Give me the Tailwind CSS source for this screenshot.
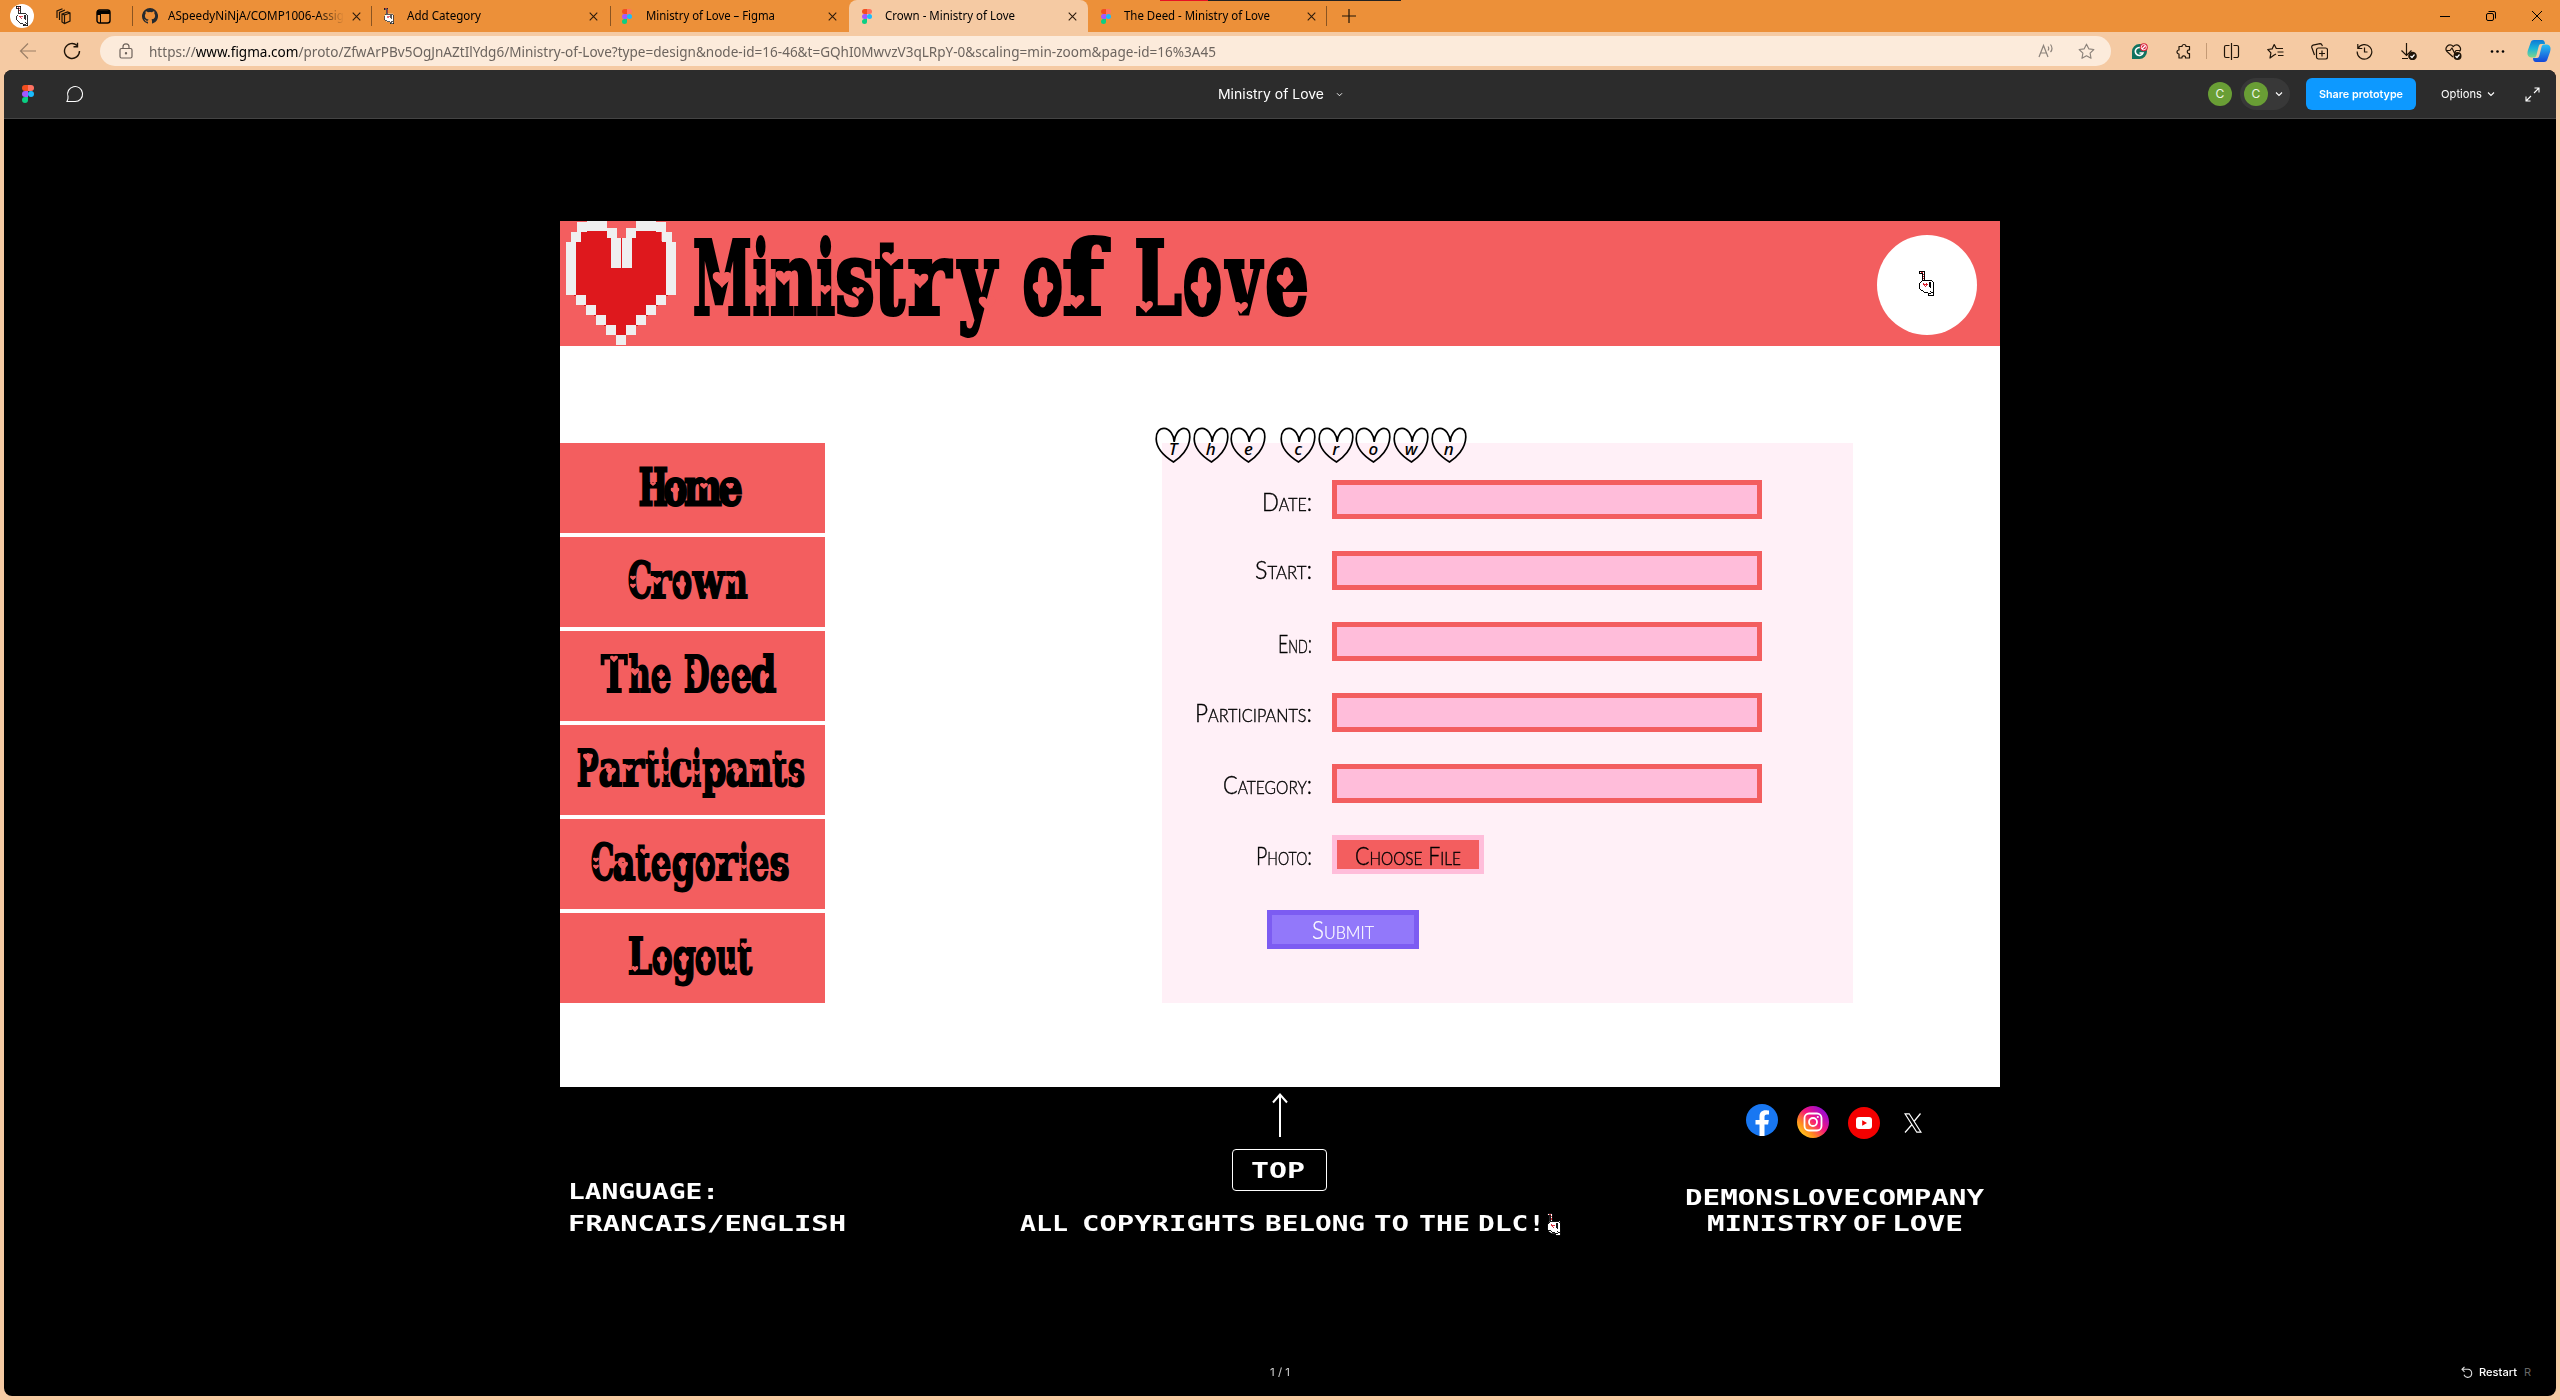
<!DOCTYPE html>
<html lang="en">
<head>
<meta charset="utf-8">
<title>Crown - Ministry of Love</title>
<script src="https://cdn.jsdelivr.net/npm/@tailwindcss/browser@4"></script>
</head>
<body class="w-[2560px] h-[1400px] overflow-hidden bg-[#f5caa3] font-['Noto_Sans','Open_Sans',sans-serif] text-black">
<svg class="hidden">
  <symbol id="figma" viewBox="0 0 12 18"><path fill="#f24e1e" d="M3 0h3v6H3a3 3 0 0 1 0-6z"/><path fill="#ff7262" d="M6 0h3a3 3 0 0 1 0 6H6z"/><path fill="#a259ff" d="M3 6h3v6H3a3 3 0 0 1 0-6z"/><circle cx="9" cy="9" r="3" fill="#1abcfe"/><path fill="#0acf83" d="M3 12h3v3a3 3 0 1 1-3-3z"/></symbol>
  <symbol id="heart" viewBox="0 0 20 20" preserveAspectRatio="none"><path d="M10 20C7 14 0 11 0 5C0-1 8-2 10 4C12-2 20-1 20 5C20 11 13 14 10 20z"/></symbol>
  <symbol id="cane" viewBox="0 0 15 25"><path fill="#fff" d="M0 0h6v9h8l1 16H9v-3H5L2 20L0 17v-4l3-4V3H0z"/><path fill="none" stroke="#000" shape-rendering="crispEdges" d="M0 .5h6M.5 0v3M0 2.5h4M3.5 3v6M5.5 0v9M3 9.5h10M2 10.5h1M1 11.5h1M.5 12v6M1 18.5h1M2 19.5h2M4 20.5h1M5 21.5h4M13 10.5h1M14.5 11v14M9 24.5h6M9.5 22v3M10 22.5h2M11 20.5h1M12 21.5h2M10.5 11v5M11.500 11v6"/><path fill="none" stroke="#d81e2c" shape-rendering="crispEdges" d="M2 1.500h2M4.500 3v1M4.500 5v1M4.500 7v1M4 12.500h1M7 12.500h1M4 13.500h5M5 14.500h1M7 14.500h1M6 15.500h1"/></symbol>
  <symbol id="x" viewBox="0 0 10 10"><path d="M.8.8l8.400 8.400M9.200.8L.8 9.200" fill="none" stroke="#2a1a0c" stroke-width="1.200"/></symbol>
  <symbol id="chev" viewBox="0 0 8 6"><path d="M1 1.500l3 3l3-3" fill="none" stroke="#fff" stroke-width="1.100"/></symbol>
</svg>

<!-- Tab strip -->
<header class="relative flex h-8 items-center bg-[#ec9039] text-[12px] leading-none">
  <div class="absolute left-[1160px] top-0 flex h-[1px] w-[241px] bg-[#222]"><div class="w-12 bg-[#e81123]"></div></div>
  <div class="flex w-[132px] items-center pl-[10px]">
    <div class="flex size-6 items-center justify-center rounded-full bg-white"><svg class="h-5 w-3"><use href="#cane"/></svg></div>
    <svg class="ml-5 size-[17px]" viewBox="0 0 17 17" fill="none" stroke="#1f1408" stroke-width="1.200"><path d="M8 6l5.500-2 2.500 1v8l-5.500 2.500L8 14zM8 6l2.500 1v8M10.500 7L16 5M5.500 12V4.500L11 2M3 10V3L8.500.8"/></svg>
    <svg class="ml-[25px] size-[15px]" viewBox="0 0 15 15"><rect x="1" y="1" width="13" height="13" rx="2.500" fill="none" stroke="#000" stroke-width="1.400"/><path d="M1 1.500h13V5H1zM1 5h3v1H1z"/><path d="M4.500 5v9" stroke="#000"/></svg>
  </div>
  <div class="flex h-8 w-[239px] items-center"><i class="h-5 w-px bg-[#8a5421]"></i>
    <svg class="ml-[9px] size-4" viewBox="0 0 16 16"><path fill="#24292f" d="M8 0a8 8 0 0 0-2.530 15.590c.4.070.55-.17.550-.38v-1.490C3.800 14.200 3.330 12.800 3.330 12.800c-.36-.92-.9-1.170-.9-1.170-.72-.5.060-.49.060-.49.8.060 1.230.82 1.230.82.710 1.220 1.870.87 2.330.66.070-.52.280-.87.500-1.070-1.770-.2-3.640-.89-3.640-3.950 0-.87.310-1.590.82-2.150-.08-.2-.36-1.020.080-2.120 0 0 .67-.21 2.200.82a7.600 7.600 0 0 1 4 0c1.530-1.040 2.200-.82 2.200-.82.440 1.100.160 1.920.080 2.120.510.560.820 1.270.820 2.150 0 3.070-1.870 3.750-3.650 3.950.290.250.540.730.540 1.480v2.190c0 .21.150.46.550.38A8 8 0 0 0 8 0z"/></svg>
    <span class="ml-[10px] w-[176px] overflow-hidden whitespace-nowrap [mask-image:linear-gradient(to_right,#000_85%,transparent)]"><span data-w="176" class="leading-4">ASpeedyNiNjA/COMP1006-Assig</span></span>
    <svg class="ml-[8px] size-[9px]"><use href="#x"/></svg></div>
  <div class="flex h-8 w-[239px] items-center"><i class="h-5 w-px bg-[#8a5421]"></i>
    <svg class="ml-[12px] h-4 w-[10px]"><use href="#cane"/></svg>
    <span class="ml-[13px] w-[182px]"><span data-w="74" class="leading-4">Add Category</span></span>
    <svg class="size-[9px]"><use href="#x"/></svg></div>
  <div class="flex h-8 w-[239px] items-center"><i class="h-5 w-px bg-[#8a5421]"></i>
    <svg class="ml-[11px] h-[15px] w-[10px]"><use href="#figma"/></svg>
    <span class="ml-[14px] w-[182px]"><span data-w="129" class="leading-4">Ministry of Love – Figma</span></span>
    <svg class="size-[9px]"><use href="#x"/></svg></div>
  <div class="flex h-8 w-[239px] items-center rounded-t-lg bg-[#f5caa3]">
    <svg class="ml-[13px] h-[15px] w-[10px]"><use href="#figma"/></svg>
    <span class="ml-[13px] w-[183px]"><span data-w="130" class="leading-4">Crown - Ministry of Love</span></span>
    <svg class="size-[9px]"><use href="#x"/></svg></div>
  <div class="flex h-8 w-[238px] items-center">
    <svg class="ml-[13px] h-[15px] w-[10px]"><use href="#figma"/></svg>
    <span class="ml-[13px] w-[183px]"><span data-w="146" class="leading-4">The Deed - Ministry of Love</span></span>
    <svg class="size-[9px]"><use href="#x"/></svg></div>
  <i class="h-5 w-px bg-[#8a5421]"></i>
  <svg class="ml-[15px] size-[14px]" viewBox="0 0 14 14"><path d="M7 0v14M0 7h14" stroke="#1f1408" stroke-width="1.200"/></svg>
  <div class="ml-auto flex items-center pr-[18px]">
    <svg class="size-[10px]" viewBox="0 0 10 10"><path d="M0 5.500h10" stroke="#000"/></svg>
    <svg class="ml-[36px] size-[10px]" viewBox="0 0 10 10" fill="none" stroke="#000"><rect x=".5" y="2.500" width="7" height="7" rx="1.500"/><path d="M2.500.5H8a1.500 1.500 0 0 1 1.500 1.500v5.500"/></svg>
    <svg class="ml-[36px] size-[10px]" viewBox="0 0 10 10"><path d="M0 0l10 10M10 0L0 10" stroke="#000"/></svg>
  </div>
</header>

<!-- Address bar -->
<div class="flex h-[38px] items-center">
  <svg class="ml-[19px] size-[18px]" viewBox="0 0 18 18" fill="none" stroke="#9b7f66" stroke-width="1.200"><path d="M17 9H1.500M9 1.500L1.500 9L9 16.500"/></svg>
  <svg class="ml-[26px] size-[18px]" viewBox="0 0 18 18" fill="none" stroke="#1f1408" stroke-width="1.400"><path d="M16.500 9a7.500 7.500 0 1 1-2.500-5.600M14.500.8v4H10.500"/></svg>
  <div class="ml-[19px] flex h-[30px] w-[2011px] items-center rounded-full bg-[#fcebdb]">
    <svg class="ml-[19px] h-4 w-[14px]" viewBox="0 0 14 16" fill="none" stroke="#6d625a" stroke-width="1.200"><rect x="1" y="5.500" width="12" height="9.500" rx="1.500"/><path d="M4 5.500V3.800a3 3 0 0 1 6 0V5.500"/><circle cx="7" cy="10.300" r=".6"/></svg>
    <span class="ml-[16px] w-[1067px] whitespace-nowrap"><span data-w="1067" class="text-[14px] leading-5 text-[#6d655f]">https://<b class="font-normal text-black">www.figma.com</b>/proto/ZfwArPBv5OgJnAZtIlYdg6/Ministry-of-Love?type=design&amp;node-id=16-46&amp;t=GQhI0MwvzV3qLRpY-0&amp;scaling=min-zoom&amp;page-id=16%3A45</span></span>
    <div class="ml-auto flex items-center gap-6 pr-4">
      <svg class="size-4" viewBox="0 0 16 16" fill="none" stroke="#8c837b" stroke-width="1.200"><path d="M1 14L5.500 2.500L10 14M2.500 10h6M10 3.500q1.500 2 0 4M12.500 1.500q3 4 0 7.500"/></svg>
      <svg class="size-[17px]" viewBox="0 0 18 18" fill="none" stroke="#8c837b" stroke-width="1.200" stroke-linejoin="round"><path d="M9 1.200l2.400 5 5.400.7-4 3.800 1 5.500L9 13.500l-4.800 2.700 1-5.500-4-3.800 5.400-.7z"/></svg>
    </div>
  </div>
  <div class="flex w-[95px] items-center justify-between pl-[20px]">
    <svg class="size-[17px]" viewBox="0 0 17 17"><path d="M1 16V8.500A7.500 7.500 0 1 1 8.500 16z" fill="#10735f"/><path d="M11.500 6A4 4 0 1 0 12 10H8.500" fill="none" stroke="#fff" stroke-width="1.600"/><circle cx="12.800" cy="4.200" r="4" fill="#d9213b"/><path d="M11 6l3.500-3.500" stroke="#fff" stroke-width="1.200"/><circle cx="12.800" cy="4.200" r="2.600" fill="none" stroke="#fff" stroke-width=".9"/></svg>
    <svg class="mr-[14px] size-[17px]" viewBox="0 0 17 17" fill="none" stroke="#1f1408" stroke-width="1.200" stroke-linejoin="round"><path d="M4 3.500h3a2 2 0 1 1 4 0h3.500V7a1.800 1.800 0 1 0 0 3.500V15h-4a1.800 1.800 0 1 0-3.500 0H4v-4a2 2 0 1 1 0-4z"/></svg>
  </div>
  <i class="h-4 w-px bg-[#c49a75]"></i>
  <div class="ml-[2px] flex items-center [&>*]:mx-[13.700px]">
    <svg class="size-[17px]" viewBox="0 0 17 17" fill="none" stroke="#1f1408" stroke-width="1.200"><path d="M6.500 2.500H3A1.500 1.500 0 0 0 1.500 4v9A1.500 1.500 0 0 0 3 14.500h3.500M10.500 2.500H14A1.500 1.500 0 0 1 15.500 4v9a1.500 1.500 0 0 1-1.500 1.500h-3.500M8.500 0v17"/></svg>
    <svg class="size-[17px]" viewBox="0 0 17 17" fill="none" stroke="#1f1408" stroke-width="1.200" stroke-linejoin="round"><path d="M9 11l-2.200 1.300-3.800 2.700.9-5.200L.8 6.500l4.300-.6L7.200 1.500 9.300 5.500h6.700M10.500 9h6M11 12.500h5.500"/></svg>
    <svg class="size-[17px]" viewBox="0 0 17 17" fill="none" stroke="#1f1408" stroke-width="1.200"><rect x="5.500" y="5" width="11" height="11" rx="2"/><path d="M11 7.500v6M8 10.500h6M3.500 12L.8 4.500a2 2 0 0 1 1.200-2.400L9 .6a2 2 0 0 1 2 1.500l.4 1"/></svg>
    <svg class="size-[17px]" viewBox="0 0 17 17" fill="none" stroke="#1f1408" stroke-width="1.200"><path d="M2 5.500a7.300 7.300 0 1 1-.8 3M1.800 1v4.500h4.500M8.500 4.500v4.500h3"/></svg>
    <svg class="size-[17px]" viewBox="0 0 17 17" fill="none" stroke="#1f1408" stroke-width="1.200"><path d="M6.500 0v12M1.500 7.500l5 5 5-5M2 15.500h6"/><circle cx="12.500" cy="13" r="4.300" fill="#1f1408" stroke="none"/><path d="M10.500 13l1.500 1.500 2.500-3" stroke="#fff"/></svg>
    <svg class="size-[17px]" viewBox="0 0 17 17" fill="none" stroke="#1f1408" stroke-width="1.200"><path d="M8 14L2 8.500C-1 5 4-1 8.300 3.500C12.500-1 17.500 5 14.500 8.500M1 7.500h4L7 5l2.500 5L11 7.500h4"/><circle cx="12.500" cy="13" r="4" fill="#1f1408" stroke="none"/><path d="M10.500 13l1.500 1.500 2.500-3" stroke="#fff"/></svg>
    <svg class="size-[17px]" viewBox="0 0 17 17"><circle cx="3" cy="8.500" r="1.300"/><circle cx="8.500" cy="8.500" r="1.300"/><circle cx="14" cy="8.500" r="1.300"/></svg>
  </div>
  <svg class="ml-[7px] size-6" viewBox="0 0 24 24"><defs><linearGradient id="ca" x1="0" y1="0" x2="0" y2="1"><stop stop-color="#0e79d6"/><stop offset=".5" stop-color="#1cb5d8"/><stop offset="1" stop-color="#7fd58a"/></linearGradient><linearGradient id="cb" x1="0" y1="0" x2="0" y2="1"><stop stop-color="#2cc0f0"/><stop offset="1" stop-color="#1346d8"/></linearGradient></defs><path fill="url(#ca)" d="M7 1h8c2 0 3 2 3 4h-4c-1.500 0-2 1-2.500 3l-2 8c-.5 2-1.500 2.500-3 2.500H4C0 18 0 14 1 11L3.500 4C4 2 5 1 7 1z"/><path fill="url(#cb)" d="M17 23H9c-2 0-3-1.500-3-4h4c1.500 0 2-1 2.500-3l2-8C15 6 16 5.500 17.500 5.500H20c4 .5 4 4.500 3 7.500l-2.500 7C20 22 19 23 17 23z"/></svg>
</div>

<!-- Prototype viewer -->
<main class="mx-1 h-[1326px] overflow-hidden rounded-lg bg-black">
  <div class="flex h-[49px] items-center border-b border-[#444] bg-[#2c2c2c] font-['Inter',sans-serif] text-[11px] text-white">
    <svg class="ml-[18px] h-[18px] w-3"><use href="#figma"/></svg>
    <svg class="ml-[32px] size-[18px]" viewBox="0 0 18 18" fill="none" stroke="#fff" stroke-width="1.100"><path d="M1 16.500h8A7.500 7.500 0 1 0 2 11.500c.3 2-.2 3.500-1 5z"/></svg>
    <span class="ml-[1134px] w-[106px]"><span data-w="106" class="text-[13px] leading-5">Ministry of Love</span></span>
    <svg class="ml-[12px] h-[5px] w-[7px]"><use href="#chev"/></svg>
    <div class="ml-auto flex items-center">
      <div class="flex size-6 items-center justify-center rounded-full bg-[#699e35] text-[12px] text-white/90">C</div>
      <div class="ml-2 flex h-8 w-[50px] items-center rounded-full bg-[#383838] pl-[4px]"><div class="flex size-6 items-center justify-center rounded-full bg-[#699e35] text-[12px] text-white/90">C</div><svg class="ml-[7px] h-[6px] w-2"><use href="#chev"/></svg></div>
      <div class="ml-4 flex h-8 w-[110px] items-center justify-center rounded-md bg-[#0d99ff]"><span data-w="84" class="font-semibold leading-4">Share prototype</span></div>
      <span class="ml-[25px] w-[41px]"><span data-w="41" class="leading-4">Options</span></span>
      <svg class="ml-[5px] h-[6px] w-2"><use href="#chev"/></svg>
      <svg class="ml-[30px] mr-[16px] size-[15px]" viewBox="0 0 15 15" fill="none" stroke="#fff" stroke-width="1.100"><path d="M9.500 1H14v4.500M14 1L9 6M1 9.500V14h4.500M1 14l5-5"/></svg>
    </div>
  </div>

  <div class="mx-auto mt-[102px] w-[1440px]">
    <div class="relative flex h-[125px] items-start bg-[#f35e5f]">
      <svg class="ml-[6px] h-[124px] w-[110px]" viewBox="0 0 110 124" shape-rendering="crispEdges"><path fill="#de181d" d="M15 10H45V17H66V10H95V20H102V75H92V85H82V95H72V105H60V115H50V105H38V95H28V85H18V75H8V20H15z"/><path fill="#f35e5f" d="M51 7h9v10h-9z"/><path fill="#efefef" d="M11 1h10v10H11zM21 0h20v10H21zM41 7h10v10H41zM45 17h10v30H45zM56 17h10v30H56zM60 7h10v10H60zM70 0h20v10H70zM90 1h10v10H90zM96 11h10v10H96zM100 21h10v53H100zM5 11h10v10H5zM0 21h10v53H0zM10 74h10v10H10zM90 74h10v10H90zM20 84h10v10H20zM80 84h10v10H80zM30 94h10v10H30zM70 94h10v10H70zM40 104h10v10H40zM60 104h10v10H60zM50 114h10v10H50z"/></svg>
      <h1 class="ml-[18px] whitespace-nowrap font-['DejaVu_Serif',serif] text-[101px] font-bold leading-[116px] [-webkit-text-stroke:4px_#000]" data-glyphs="1-55.500,60-74,78-122,124-140,144-178,182-211,215-258,262.500-304,,331-367,371-415,,443-486.500,491-526,530.500-569,574-612">Ministry of Love</h1>
      <svg class="absolute left-0 top-0 h-[125px] w-[1440px]" viewBox="0 0 1440 125" fill="#f35e5f" data-hearts="162,59,19,16 200,69,12,10 224,57,17,15 265,69,12,10 298,71,12,10 331,38,18,14 360,60,17,15 427,83,17,15 483,70,21,18 516,81,17,14 586,86,14,12 641,70,21,18 681,87,14,12 725,61,17,15"></svg>
      <div class="ml-auto mr-[23px] mt-[14px] flex size-[100px] items-center justify-center rounded-full bg-white"><svg class="mr-px mb-[3px] h-[25px] w-[15px]"><use href="#cane"/></svg></div>
    </div>

    <div class="flex h-[741px] items-start bg-white pt-[97px]">
      <nav class="flex w-[265px] flex-col gap-1 whitespace-nowrap font-['DejaVu_Serif',serif] text-[51px] font-bold leading-[87px] [&>a]:relative [&>a]:block [&>a]:h-[90px] [&>a]:bg-[#f35e5f]">
        <a><span class="block pt-px [-webkit-text-stroke:3px_#000]" data-glyphs="80-106.500,105-126,125-161,160-181.500">Home</span><svg class="absolute inset-0 size-full" fill="#f35e5f" data-hearts="93,41,6,4 115,48,9,7 144,43,8,6 170,43,8,6"></svg></a>
        <a><span class="block [-webkit-text-stroke:2px_#000]" data-glyphs="69-90.500,91-112,113-131,132-165,166-187">Crown</span><svg class="absolute inset-0 size-full" fill="#f35e5f" data-hearts="73,41,6,5 73,49,6,5 97,44,9,8 121,49,10,9 147,54,7,6 172,43,9,8"></svg></a>
        <a><span class="block [-webkit-text-stroke:2px_#000]" data-glyphs="41-67.500,69-90,92-110.500,,125-149,151-169,171.500-190.500,192-216">The Deed</span><svg class="absolute inset-0 size-full" fill="#f35e5f" data-hearts="54,28,8,7 75,41,9,8 101,45,8,7 136,38,10,9 136,47,10,9 161,45,8,7 181,45,8,7 205,46,9,8"></svg></a>
        <a><span class="block [-webkit-text-stroke:2px_#000]" data-glyphs="18-38.500,40-61.500,63-85,86-99.500,101.500-109.500,111-131,133-141,142.500-165,166.500-188,189.500-211,213-227.500,229-244">Participants</span><svg class="absolute inset-0 size-full" fill="#f35e5f" data-hearts="28,33,10,9 51,47,10,9 69,43,8,7 93,33,8,7 106,48,6,5 123,39,6,5 137,48,6,5 155,47,10,9 178,47,10,9 196,43,8,7 220,33,8,7 236,50,5,4"></svg></a>
        <a><span class="block [-webkit-text-stroke:2px_#000]" data-glyphs="32-53,54-75,76-90.500,92-110.500,112.500-134.500,136-154.500,156-178.500,180-188,190-208.500,210.500-228">Categories</span><svg class="absolute inset-0 size-full" fill="#f35e5f" data-hearts="36,41,6,5 36,48,6,5 63,47,10,9 84,33,8,7 101,45,8,7 123,46,9,8 145,47,10,9 161,43,8,7 184,48,6,5 199,45,8,7 220,50,5,4"></svg></a>
        <a><span class="block [-webkit-text-stroke:2px_#000]" data-glyphs="69-91.500,93-111.500,113.500-135,136-155,157-176.500,178-192.500">Logout</span><svg class="absolute inset-0 size-full" fill="#f35e5f" data-hearts="75,56,7,6 102,48,10,9 124,47,10,9 146,48,10,9 171,54,8,7 185,33,8,7"></svg></a>
      </nav>

      <section class="relative ml-[337px] h-[560px] w-[691px] bg-[#fff0f7] pt-[37px] font-['Lato',sans-serif]">
        <h2 id="crown-title" class="absolute -left-[7px] -top-[16px] flex font-['Noto_Sans',sans-serif]"></h2>
        <div class="flex flex-col gap-8 text-[25px] font-light leading-8 [font-variant-caps:small-caps] [&>label]:flex [&>label]:h-[39px] [&>label]:items-start [&_b]:flex [&_b]:w-[150px] [&_b]:justify-end [&_b]:font-light [&_b]:[-webkit-text-stroke:0.4px_#000] [&_i]:ml-[20px] [&_i]:block [&_i]:h-[39px] [&_i]:w-[430px] [&_i]:border-[5px] [&_i]:border-[#f35e5f] [&_i]:bg-[#ffbdda]">
          <label><b class="pt-[5px]"><span data-w="50">Date:</span></b><i></i></label>
          <label><b class="pt-[2px]"><span data-w="57">Start:</span></b><i></i></label>
          <label><b class="pt-[5px]"><span data-w="34">End:</span></b><i></i></label>
          <label><b class="pt-[3px]"><span data-w="117">Participants:</span></b><i></i></label>
          <label><b class="pt-[4px]"><span data-w="89">Category:</span></b><i></i></label>
          <label><b class="pt-[4px]"><span data-w="56">Photo:</span></b><button class="ml-[20px] flex h-[39px] w-[152px] items-start justify-center border-[5px] border-[#ffbdda] bg-[#f35e5f] font-light leading-[30px] [-webkit-text-stroke:0.4px_#000] [font-variant-caps:small-caps]"><span data-w="106">Choose File</span></button></label>
        </div>
        <button class="ml-[105px] mt-9 flex h-[39px] w-[152px] items-start justify-center border-[5px] border-[#7c5cf2] bg-[#9278fa] text-[25px] font-light leading-[28px] text-white [-webkit-text-stroke:0.2px_#fff] [font-variant-caps:small-caps]"><span data-w="62">Submit</span></button>
      </section>
    </div>

    <footer class="grid grid-cols-[460px_526px_454px] font-['DejaVu_Sans_Mono',monospace] text-[22px] font-bold leading-8 text-white">
      <div class="pl-[8px] pt-[89px]"><p class="h-8"><span data-w="151">LANGUAGE:</span></p><p class="h-8"><span data-w="278">FRANCAIS/ENGLISH</span></p></div>
      <div class="flex flex-col">
        <svg class="ml-[252px] mt-[6px] h-[44px] w-4" viewBox="0 0 16 44" fill="none" stroke="#fff" stroke-width="2"><path d="M8 44V1M1 9.500l7-8 7 8"/></svg>
        <div class="ml-[212px] mt-3 flex h-[42px] w-[95px] items-center justify-center rounded border border-white pr-1 pt-px"><span data-w="54">TOP</span></div>
        <p class="mt-[17px] flex h-8 items-center"><span data-w="48">ALL</span><span class="ml-[14px]" data-w="174">COPYRIGHTS</span><span class="ml-[9px]" data-w="100">BELONG</span><span class="ml-[9px]" data-w="35">TO</span><span class="ml-[10px]" data-w="51">THE</span><span class="ml-[8px]" data-w="67">DLC!</span><svg class="ml-[2px] h-[23px] w-[14px] shrink-0"><use href="#cane"/></svg></p>
      </div>
      <div class="flex flex-col">
        <div class="mt-[17px] flex items-start pl-[200px]">
          <svg class="size-8" viewBox="0 0 32 32"><circle cx="16" cy="16" r="16" fill="#1877f2"/><path fill="#fff" d="M13.500 32V20.600H9.500V16h4v-3.500c0-4 2.400-6.200 6-6.200 1.700 0 3.500.3 3.500.3v3.900h-2c-2 0-2.500 1.200-2.500 2.400V16h4.300l-.7 4.600h-3.600V32z"/></svg>
          <svg class="ml-[19px] mt-[2px] size-8" viewBox="0 0 32 32"><defs><linearGradient id="ig" x1="0" y1="1" x2="1" y2="0"><stop offset=".1" stop-color="#ffd21f"/><stop offset=".3" stop-color="#ff8a1f"/><stop offset=".55" stop-color="#f5157f"/><stop offset=".9" stop-color="#8a0be0"/></linearGradient></defs><circle cx="16" cy="16" r="16" fill="url(#ig)"/><g fill="none" stroke="#fff" stroke-width="1.800"><rect x="7.500" y="7.500" width="17" height="17" rx="4.500"/><circle cx="16" cy="16" r="4"/></g><circle cx="20.800" cy="11" r="1.100" fill="#fff"/></svg>
          <svg class="ml-[19px] mt-[3px] size-8" viewBox="0 0 32 32"><circle cx="16" cy="16" r="16" fill="#f40000"/><rect x="8" y="10" width="16" height="12" rx="3" fill="#fff"/><path fill="#f40000" d="M14.200 13.200v5.600l4.800-2.800z"/></svg>
          <svg class="ml-[24px] mt-[9px] h-[20px] w-[18px]" viewBox="0 0 18 20" fill="none" stroke="#fff" stroke-width="1.200"><path d="M1 .8h4.200L17 19.200h-4.200zM16.500.5L10 8.500M8 11.500L1 19.500"/></svg>
        </div>
        <div class="mt-[46px] flex w-[299px] flex-col leading-[26px] ml-[139px]"><p class="h-[26px]"><span data-w="299">DEMONSLOVECOMPANY</span></p><p class="flex h-[26px] pl-[22px]"><span data-w="140">MINISTRY</span><span class="ml-[6px]" data-w="34">OF</span><span class="ml-[5px]" data-w="71">LOVE</span></p></div>
      </div>
    </footer>
  </div>

  <div class="mt-[124px] flex items-center pl-[1266px] font-['Inter',sans-serif] text-[11px] leading-4 text-white">
    <span class="w-5"><span data-w="20" class="text-white/80">1 / 1</span></span>
    <svg class="ml-[1171px] size-3" viewBox="0 0 12 12" fill="none" stroke="#ddd" stroke-width="1.100"><path d="M3.500.8L1 3.300l2.500 2.500M1 3.300h6a4 4 0 1 1-4 5.500"/></svg>
    <span class="ml-[6px] w-[38px]"><span data-w="38" class="font-medium">Restart</span></span><span class="ml-[7px] text-[#666]">R</span>
  </div>
</main>

<script>
const NS = 'http://www.w3.org/2000/svg';

// Title badge: one outlined heart per letter
document.getElementById('crown-title').innerHTML = [...'The crown'].map(c => c === ' '
  ? '<span class="w-[12px]"> </span>'
  : `<span class="relative block h-[36px] w-[37.700px]"><svg class="absolute inset-0 h-[36px] w-[36px]" viewBox="0 0 36 36" fill="none" stroke="#000" stroke-width="1.700"><path d="M18.500 35C12 31 1.500 24 1.200 12C1 5 4.500 1.300 9 1.300C14.500 1.300 19 8 19.200 15C19.500 8 24 1.300 29 1.300C33 1.300 35 5 34.800 10C34.500 22 25 31 18.500 35z"/></svg><span class="absolute left-0 top-[12px] w-[36px] text-center text-[17px] font-medium italic leading-5">${c}</span></span>`).join('');

// Cut-out hearts in the lettering: centre x, centre y, width, height
for (const svg of document.querySelectorAll('[data-hearts]'))
  for (const h of svg.dataset.hearts.split(' ')) {
    const [x, y, w, t] = h.split(',').map(Number), u = document.createElementNS(NS, 'use');
    u.setAttribute('href', '#heart');
    u.setAttribute('x', x - w / 2); u.setAttribute('y', y - t / 2);
    u.setAttribute('width', w); u.setAttribute('height', t);
    svg.append(u);
  }

// Stretch a run of text to its column width
function fitWords() {
  for (const el of document.querySelectorAll('[data-w]')) {
    el.classList.add('inline-block', 'origin-left', 'whitespace-nowrap', 'shrink-0');
    const w = +el.dataset.w, n = el.getBoundingClientRect().width;
    el.style.transform = `scaleX(${w / n})`;
    el.style.marginRight = `${w - n}px`;
  }
}

// Lay display lettering out glyph by glyph
function fitGlyphs() {
  const ctx = document.createElement('canvas').getContext('2d');
  for (const el of document.querySelectorAll('[data-glyphs]')) {
    const cs = getComputedStyle(el), text = [...el.textContent];
    const boxes = el.dataset.glyphs.split(',').map(s => s ? s.split('-').map(Number) : null);
    ctx.font = `${cs.fontWeight} ${cs.fontSize} ${cs.fontFamily}`;
    el.textContent = '';
    let x = 0;
    text.forEach((c, i) => {
      const s = document.createElement('span');
      s.textContent = c;
      s.className = 'inline-block w-0';
      if (boxes[i]) {
        const [a, b] = boxes[i], m = ctx.measureText(c);
        const k = (b - a) / (m.actualBoundingBoxRight + m.actualBoundingBoxLeft);
        s.className = 'inline-block origin-left';
        s.style.width = `${b - a}px`;
        s.style.marginLeft = `${a - x}px`;
        s.style.transform = `translateX(${m.actualBoundingBoxLeft * k}px) scaleX(${k})`;
        x = b;
      }
      el.append(s);
    });
  }
}

// Measure only once the stylesheet is in force
(function start() {
  if (getComputedStyle(document.body).width !== '2560px' || getComputedStyle(document.querySelector('h1')).fontSize !== '101px')
    return setTimeout(start, 10);
  fitWords();
  fitGlyphs();
})();
</script>
</body>
</html>
